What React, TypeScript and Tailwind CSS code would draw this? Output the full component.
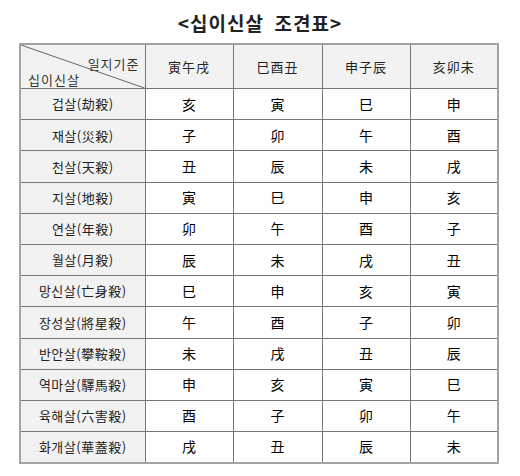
const heads = ["寅午戌", "巳酉丑", "申子辰", "亥卯未"];

const rows: [string, string[]][] = [
  ["겁살(劫殺)", ["亥", "寅", "巳", "申"]],
  ["재살(災殺)", ["子", "卯", "午", "酉"]],
  ["천살(天殺)", ["丑", "辰", "未", "戌"]],
  ["지살(地殺)", ["寅", "巳", "申", "亥"]],
  ["연살(年殺)", ["卯", "午", "酉", "子"]],
  ["월살(月殺)", ["辰", "未", "戌", "丑"]],
  ["망신살(亡身殺)", ["巳", "申", "亥", "寅"]],
  ["장성살(將星殺)", ["午", "酉", "子", "卯"]],
  ["반안살(攀鞍殺)", ["未", "戌", "丑", "辰"]],
  ["역마살(驛馬殺)", ["申", "亥", "寅", "巳"]],
  ["육해살(六害殺)", ["酉", "子", "卯", "午"]],
  ["화개살(華蓋殺)", ["戌", "丑", "辰", "未"]],
];

const font = { fontFamily: '"Noto Sans CJK KR", "Noto Sans", sans-serif' };

export default function App() {
  return (
    <div className="w-[520px] h-[476px] bg-white pt-[10px]" style={font}>
      <h1 className="text-center text-[19px] font-bold leading-[26px] tracking-[1px] text-[#222]">
        &lt;십이신살&nbsp;&nbsp;조견표&gt;
      </h1>
      <table className="ml-[19px] mt-[7px] w-[478px] table-fixed border-collapse border-2 border-[#a3a3a3]">
        <colgroup>
          <col className="w-[125px]" />
          <col className="w-[88px]" />
          <col className="w-[89px]" />
          <col className="w-[88px]" />
          <col className="w-[88px]" />
        </colgroup>
        <thead>
          <tr className="h-[44px] bg-[#f2f2f2]">
            <th className="relative border border-[#777] p-0 text-[13px] font-normal text-[#333]">
              <svg className="absolute inset-0 h-full w-full" preserveAspectRatio="none" viewBox="0 0 100 100">
                <line x1="0" y1="0" x2="100" y2="100" stroke="#666" strokeWidth="1" vectorEffect="non-scaling-stroke" />
              </svg>
              <div className="flex h-full flex-col justify-between pl-[7px] pr-[5px] pt-[11px] leading-[16px] tracking-[1px]">
                <span className="text-right">일지기준</span>
                <span className="text-left">십이신살</span>
              </div>
            </th>
            {heads.map((h) => (
              <th key={h} className="border border-[#777] text-[13px] font-normal tracking-[1px] text-[#222]">
                {h}
              </th>
            ))}
          </tr>
        </thead>
        <tbody>
          {rows.map(([label, vals]) => (
            <tr key={label} className="h-[31.2px]">
              <td className="border border-[#777] bg-[#f2f2f2] text-center text-[13px] tracking-[0.5px] text-[#222]">
                {label}
              </td>
              {vals.map((v, i) => (
                <td key={i} className="border border-[#777] text-center text-[14px] font-normal text-black">
                  {v}
                </td>
              ))}
            </tr>
          ))}
        </tbody>
      </table>
    </div>
  );
}
